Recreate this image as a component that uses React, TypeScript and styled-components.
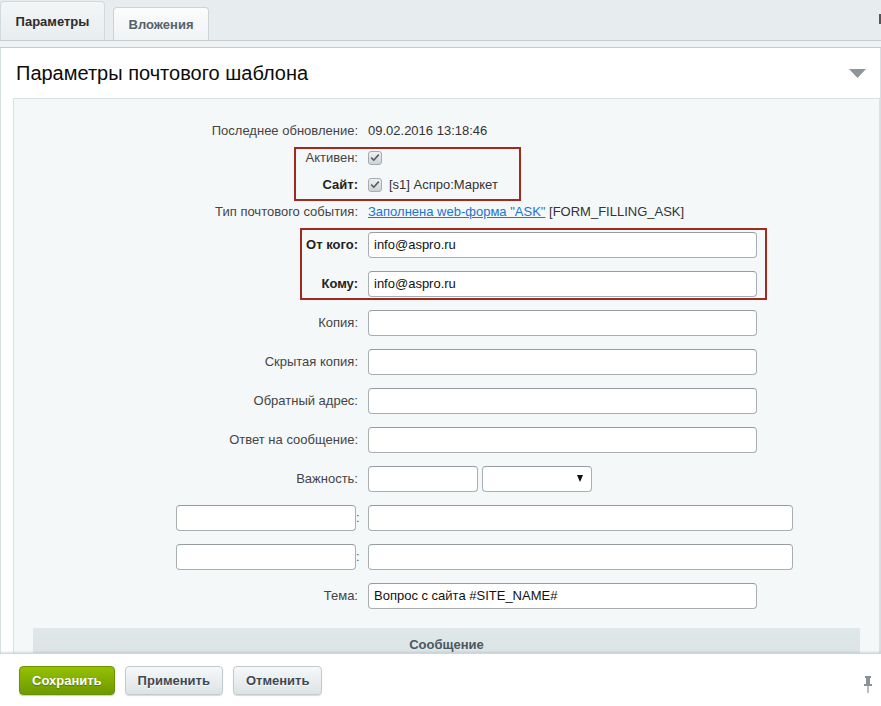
import React from "react";
import styled, { createGlobalStyle } from "styled-components";

const Global = createGlobalStyle`
  html, body { margin: 0; padding: 0; }
  body {
    font-family: "Liberation Sans", Arial, sans-serif;
    font-size: 13px;
    color: #3c3c3c;
    background: #ffffff;
  }
  * { box-sizing: border-box; }
`;

const Page = styled.div`
  width: 881px;
  height: 706px;
  display: flex;
  flex-direction: column;
  overflow: hidden;
`;

const TabBar = styled.div`
  position: relative;
  height: 41px;
  flex: none;
  display: flex;
  align-items: flex-end;
  gap: 8px;
  background: #e7ecee;
  border-bottom: 1px solid #c8cfd2;
`;

const Tab = styled.div<{ $active?: boolean }>`
  height: ${(p) => (p.$active ? 39 : 33)}px;
  width: ${(p) => (p.$active ? 105 : 96)}px;
  display: flex;
  align-items: center;
  justify-content: center;
  font-weight: bold;
  font-size: 13px;
  color: ${(p) => (p.$active ? "#2b2b2b" : "#56616a")};
  background: ${(p) =>
    p.$active
      ? "linear-gradient(#f3f6f7, #e8edef)"
      : "linear-gradient(#fbfcfc, #f0f3f4)"};
  border: 1px solid ${(p) => (p.$active ? "#d3d9dc" : "#cdd4d7")};
  border-bottom: none;
  border-radius: 4px 4px 0 0;
`;

const TabEdgeMark = styled.div`
  position: absolute;
  right: 0;
  top: 14px;
  width: 2px;
  height: 10px;
  background: #555;
`;

const Strip = styled.div`
  height: 7px;
  flex: none;
  background: #eef2f3;
  border-bottom: 1px solid #c3cacd;
`;

const Panel = styled.div`
  flex: 1;
  overflow: hidden;
  border-left: 1px solid #d8dfe1;
  border-right: 1px solid #d8dfe1;
  padding: 0 0 0 12px;
`;

const PanelHeader = styled.div`
  height: 50px;
  display: flex;
  align-items: center;
  justify-content: space-between;
  padding: 0 14px 0 3px;
`;

const Title = styled.h1`
  margin: 0;
  font-weight: normal;
  font-size: 20px;
  line-height: 24px;
  color: #0c0c0c;
`;

const Box = styled.div`
  position: relative;
  background: #f5f8f9;
  border: 1px solid #dbe1e3;
  border-bottom: none;
  padding-top: 18px;
  height: 620px;
`;

const Row = styled.div<{ $tall?: boolean }>`
  display: grid;
  grid-template-columns: 344px 1fr;
  column-gap: 10px;
  align-items: center;
  height: ${(p) => (p.$tall ? 39 : 27)}px;
`;

const Label = styled.div<{ $bold?: boolean }>`
  text-align: right;
  color: ${(p) => (p.$bold ? "#222" : "#444")};
  font-weight: ${(p) => (p.$bold ? "bold" : "normal")};
  display: flex;
  justify-content: flex-end;
  align-items: center;
`;

const Value = styled.div`
  display: flex;
  align-items: center;
  gap: 4px;
  color: #333;
`;

const Input = styled.div<{ $w: number }>`
  width: ${(p) => p.$w}px;
  height: 26px;
  background: #fff;
  border: 1px solid #a8aeb2;
  border-top-color: #969ca0;
  border-radius: 4px;
  padding: 0 5px;
  display: flex;
  align-items: center;
  color: #111;
  font-size: 13px;
  position: relative;
`;

const SelectArrow = styled.span`
  position: absolute;
  right: 8px;
  top: 8px;
  width: 0;
  height: 0;
  border-left: 3.5px solid transparent;
  border-right: 3.5px solid transparent;
  border-top: 7px solid #111;
`;

const Colon = styled.span`
  width: 2px;
  overflow: visible;
  white-space: nowrap;
  color: #555;
`;

const Check = styled.span`
  width: 14px;
  height: 14px;
  border: 1px solid #a4acaf;
  border-radius: 3px;
  background: linear-gradient(#eef0f1, #cdd3d5);
  display: inline-flex;
  align-items: center;
  justify-content: center;
  margin-right: 3px;
`;

const Link = styled.a`
  color: #2474cf;
  text-decoration: underline;
`;

const Highlight = styled.div<{ $l: number; $t: number; $w: number; $h: number }>`
  position: absolute;
  left: ${(p) => p.$l}px;
  top: ${(p) => p.$t}px;
  width: ${(p) => p.$w}px;
  height: ${(p) => p.$h}px;
  border: 2px solid #a2291d;
  pointer-events: none;
`;

const SectionHead = styled.div`
  margin: 13px 19px 0 19px;
  height: 32px;
  background: linear-gradient(#e0e7e9, #dbe3e5);
  display: flex;
  align-items: center;
  justify-content: center;
  font-weight: bold;
  color: #4b585d;
`;

const Footer = styled.div`
  height: 53px;
  flex: none;
  background: #fff;
  border-top: 1px solid #cfd7da;
  box-shadow: 0 -1px 2px rgba(150, 165, 170, 0.35);
  display: flex;
  align-items: flex-start;
  padding: 12px 8px 0 19px;
  gap: 10px;
  position: relative;
`;

const Button = styled.button<{ $primary?: boolean }>`
  height: 29px;
  padding: 0 12px;
  font-family: "Liberation Sans", Arial, sans-serif;
  font-weight: bold;
  font-size: 13px;
  border-radius: 4px;
  cursor: pointer;
  color: ${(p) => (p.$primary ? "#fff" : "#3d4a52")};
  text-shadow: ${(p) => (p.$primary ? "0 1px 1px rgba(60,80,0,0.6)" : "0 1px 0 #fff")};
  background: ${(p) =>
    p.$primary
      ? "linear-gradient(#96c000, #6d9a00)"
      : "linear-gradient(#f6f8f9, #dde3e5)"};
  border: 1px solid ${(p) => (p.$primary ? "#6a9200" : "#c2cacd")};
  box-shadow: ${(p) =>
    p.$primary ? "0 1px 1px rgba(0,0,0,0.2)" : "0 1px 1px rgba(0,0,0,0.15)"};
`;

const PinWrap = styled.div`
  margin-left: auto;
  margin-top: 10px;
`;

const CheckMark = () => (
  <svg width="10" height="9" viewBox="0 0 10 9">
    <path d="M1.2 4.6 L3.8 7.2 L8.8 1.6" fill="none" stroke="#555b5e" strokeWidth="1.6" />
  </svg>
);

const Triangle = () => (
  <svg width="17" height="9" viewBox="0 0 17 9">
    <path d="M0 0 H17 L8.5 9 Z" fill="#8d9599" />
  </svg>
);

const Pin = () => (
  <svg width="10" height="17" viewBox="0 0 10 17">
    <rect x="2" y="0" width="6" height="2" fill="#8a9296" />
    <rect x="3" y="2" width="4" height="6" fill="#8a9296" />
    <rect x="1" y="8" width="8" height="2" fill="#8a9296" />
    <rect x="4.4" y="10" width="1.2" height="7" fill="#8a9296" />
  </svg>
);

const inputRows: { label: string; value?: string; bold?: boolean }[] = [
  { label: "От кого:", value: "info@aspro.ru", bold: true },
  { label: "Кому:", value: "info@aspro.ru", bold: true },
  { label: "Копия:" },
  { label: "Скрытая копия:" },
  { label: "Обратный адрес:" },
  { label: "Ответ на сообщение:" },
];

export default function App() {
  return (
    <Page>
      <Global />
      <TabBar>
        <Tab $active>Параметры</Tab>
        <Tab>Вложения</Tab>
        <TabEdgeMark />
      </TabBar>
      <Strip />
      <Panel>
        <PanelHeader>
          <Title>Параметры почтового шаблона</Title>
          <Triangle />
        </PanelHeader>
        <Box>
          <Row>
            <Label>Последнее обновление:</Label>
            <Value>09.02.2016 13:18:46</Value>
          </Row>
          <Row>
            <Label>Активен:</Label>
            <Value>
              <Check>
                <CheckMark />
              </Check>
            </Value>
          </Row>
          <Row>
            <Label $bold>Сайт:</Label>
            <Value>
              <Check>
                <CheckMark />
              </Check>
              [s1] Аспро:Маркет
            </Value>
          </Row>
          <Row>
            <Label>Тип почтового события:</Label>
            <Value>
              <span>
                <Link href="#">Заполнена web-форма "ASK"</Link> [FORM_FILLING_ASK]
              </span>
            </Value>
          </Row>
          {inputRows.map((r) => (
            <Row $tall key={r.label}>
              <Label $bold={r.bold}>{r.label}</Label>
              <Value>
                <Input $w={389}>{r.value}</Input>
              </Value>
            </Row>
          ))}
          <Row $tall>
            <Label>Важность:</Label>
            <Value>
              <Input $w={110} />
              <Input $w={110}>
                <SelectArrow />
              </Input>
            </Value>
          </Row>
          {[0, 1].map((i) => (
            <Row $tall key={i}>
              <Label>
                <Input $w={180} />
                <Colon>:</Colon>
              </Label>
              <Value>
                <Input $w={425} />
              </Value>
            </Row>
          ))}
          <Row $tall>
            <Label>Тема:</Label>
            <Value>
              <Input $w={389}>Вопрос с сайта #SITE_NAME#</Input>
            </Value>
          </Row>
          <SectionHead>Сообщение</SectionHead>
          <Highlight $l={280} $t={48} $w={227} $h={54} />
          <Highlight $l={286} $t={129} $w={467} $h={72} />
        </Box>
      </Panel>
      <Footer>
        <Button $primary>Сохранить</Button>
        <Button>Применить</Button>
        <Button>Отменить</Button>
        <PinWrap>
          <Pin />
        </PinWrap>
      </Footer>
    </Page>
  );
}
